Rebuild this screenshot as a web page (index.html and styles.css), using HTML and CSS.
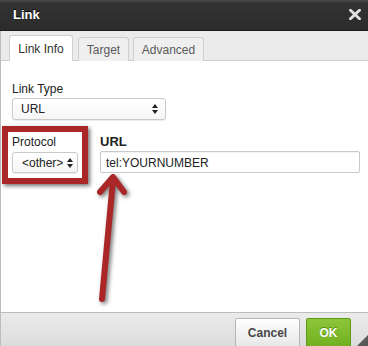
FILE: index.html
```
<!DOCTYPE html>
<html lang="en">
   <head>
      <meta charset="UTF-8" />
      <meta name="viewport" content="width=device-width, initial-scale=1.0" />
      <title>Link</title>
      <link rel="stylesheet" href="styles.css">
   </head>
   <body>
      <div class="dialog">
         <div class="titlebar">
            <span class="title">Link</span>
            <svg class="close" width="12" height="11" viewBox="0 0 12 11">
               <path d="M1.5 1.2 L10.5 9.8 M10.5 1.2 L1.5 9.8" stroke="#e2e2e2" stroke-width="2.8" stroke-linecap="square" />
            </svg>
         </div>
         <div class="tabs">
            <div class="tab active info">Link Info</div>
            <div class="tab target">Target</div>
            <div class="tab advanced">Advanced</div>
         </div>
         <div class="content">
            <div class="label">Link Type</div>
            <div class="select wide">
               <span>URL</span>
               <span class="arrows"></span>
            </div>
            <div class="row">
               <div class="field protocol">
                  <div class="label">Protocol</div>
                  <div class="select small">
                     <span>&lt;other&gt;</span>
                     <span class="arrows"></span>
                  </div>
               </div>
               <div class="field url">
                  <div class="label strong">URL</div>
                  <div class="input">tel:YOURNUMBER</div>
               </div>
            </div>
         </div>
         <div class="footer">
            <button class="btn cancel">Cancel</button>
            <button class="btn ok">OK</button>
            <span class="resize"></span>
         </div>

         <!-- annotations drawn over the dialog -->
         <div class="mark-box"></div>
         <svg class="mark-arrow" width="368" height="346" viewBox="0 0 368 346">
            <g stroke="#ab2626" stroke-width="6" stroke-linecap="round" stroke-linejoin="round" fill="none">
               <path d="M102 299 L113 180" />
               <path d="M100 192 L113 177 L124 192" />
            </g>
         </svg>
      </div>
   </body>
</html>
```

FILE: styles.css
```
body {
   margin: 0;
   padding: 0;
   background: #fff;
}

div.dialog {
   position: relative;
   width: 368px;
   height: 346px;
   overflow: hidden;
   display: flex;
   flex-direction: column;
   font-family: 'Liberation Sans', Arial, sans-serif;
   font-size: 12px;
   color: #222;
}

div.titlebar {
   height: 31px;
   box-sizing: border-box;
   display: flex;
   align-items: center;
   justify-content: space-between;
   padding: 0 7px 2px 13px;
   background: linear-gradient(#4a4a4a, #333 10%, #2b2b2b);
   border-bottom: 1px solid #1c1c1c;
}

span.title {
   color: #fff;
   font-weight: bold;
   font-size: 13px;
   text-shadow: 0 -1px 0 #000;
}

div.tabs {
   height: 30px;
   box-sizing: border-box;
   display: flex;
   align-items: flex-end;
   gap: 4px;
   padding-left: 8px;
   background: #ebebeb;
   border-bottom: 1px solid #cfcfcf;
   border-left: 1px solid #bcbcbc;
}

div.tab {
   height: 24px;
   box-sizing: border-box;
   margin-bottom: -1px;
   padding-top: 5px;
   text-align: center;
   border: 1px solid #cfcfcf;
   border-bottom: none;
   border-radius: 3px 3px 0 0;
   background: #efefef;
   color: #5a5a5a;
}

div.tab.info {
   width: 64px;
   margin-right: 1px;
}

div.tab.target {
   width: 51px;
}

div.tab.advanced {
   width: 71px;
}

div.tab.active {
   height: 26px;
   padding-top: 6px;
   background: #fff;
   color: #333;
}

div.content {
   flex: 1;
   padding: 21px 0 0 11px;
   border-left: 1px solid #bcbcbc;
}

div.label {
   line-height: 14px;
   margin-bottom: 2px;
}

div.label.strong {
   font-weight: bold;
   font-size: 13px;
}

div.select {
   height: 22px;
   box-sizing: border-box;
   display: flex;
   align-items: center;
   justify-content: space-between;
   padding: 0 7px 0 8px;
   border: 1px solid #c9c9c9;
   border-radius: 3px;
   background: linear-gradient(#fff, #f6f6f6);
   box-shadow: 0 1px 1px rgba(0, 0, 0, 0.08);
   color: #222;
}

div.select.wide {
   width: 154px;
}

div.select.small {
   width: 66px;
   height: 21px;
   padding-left: 9px;
   padding-right: 4px;
}

span.arrows {
   width: 6px;
   height: 10px;
   display: flex;
   flex-direction: column;
   justify-content: space-between;
   align-items: center;
}

span.arrows::before,
span.arrows::after {
   content: '';
   border-left: 3px solid transparent;
   border-right: 3px solid transparent;
}

span.arrows::before {
   border-bottom: 4px solid #222;
}

span.arrows::after {
   border-top: 4px solid #222;
}

div.row {
   display: flex;
   gap: 22px;
   margin-top: 15px;
}

div.field.protocol .label {
   margin-bottom: 3px;
}

div.field.url {
   flex: 1;
   padding-right: 8px;
}

div.input {
   height: 22px;
   box-sizing: border-box;
   padding: 4px 5px 0 5px;
   border: 1px solid #c9c9c9;
   border-radius: 2px;
   background: #fff;
   box-shadow: inset 0 1px 1px rgba(0, 0, 0, 0.05);
   color: #222;
}

div.footer {
   position: relative;
   height: 34px;
   box-sizing: border-box;
   display: flex;
   justify-content: flex-end;
   gap: 6px;
   padding: 5px 17px 0 0;
   background: linear-gradient(#ebebeb, #dcdcdc);
   border-top: 1px solid #bdbdbd;
   border-left: 1px solid #bcbcbc;
}

button.btn {
   height: 32px;
   box-sizing: border-box;
   padding: 0 0 3px 0;
   border-radius: 2px;
   font-family: 'Liberation Sans', Arial, sans-serif;
   font-size: 12px;
   font-weight: bold;
}

button.cancel {
   width: 65px;
   border: 1px solid #b5b5b5;
   background: linear-gradient(#fff, #e4e4e4);
   color: #474747;
}

button.ok {
   width: 45px;
   border: 1px solid #5c9a18;
   background: linear-gradient(#8cc63a, #6fae1e);
   color: #fff;
   text-shadow: 0 -1px 0 #4f8a10;
}

span.resize {
   position: absolute;
   right: 0;
   bottom: 0;
   width: 0;
   height: 0;
   border-left: 11px solid transparent;
   border-bottom: 11px solid #595959;
}

div.mark-box {
   position: absolute;
   left: 2px;
   top: 126px;
   width: 74px;
   height: 46px;
   border: 6px solid #ab2626;
   box-shadow: 2px 2px 4px rgba(0, 0, 0, 0.55);
   pointer-events: none;
}

svg.mark-arrow {
   position: absolute;
   left: 0;
   top: 0;
   pointer-events: none;
   filter: drop-shadow(2px 2px 2px rgba(0, 0, 0, 0.55));
}
```
